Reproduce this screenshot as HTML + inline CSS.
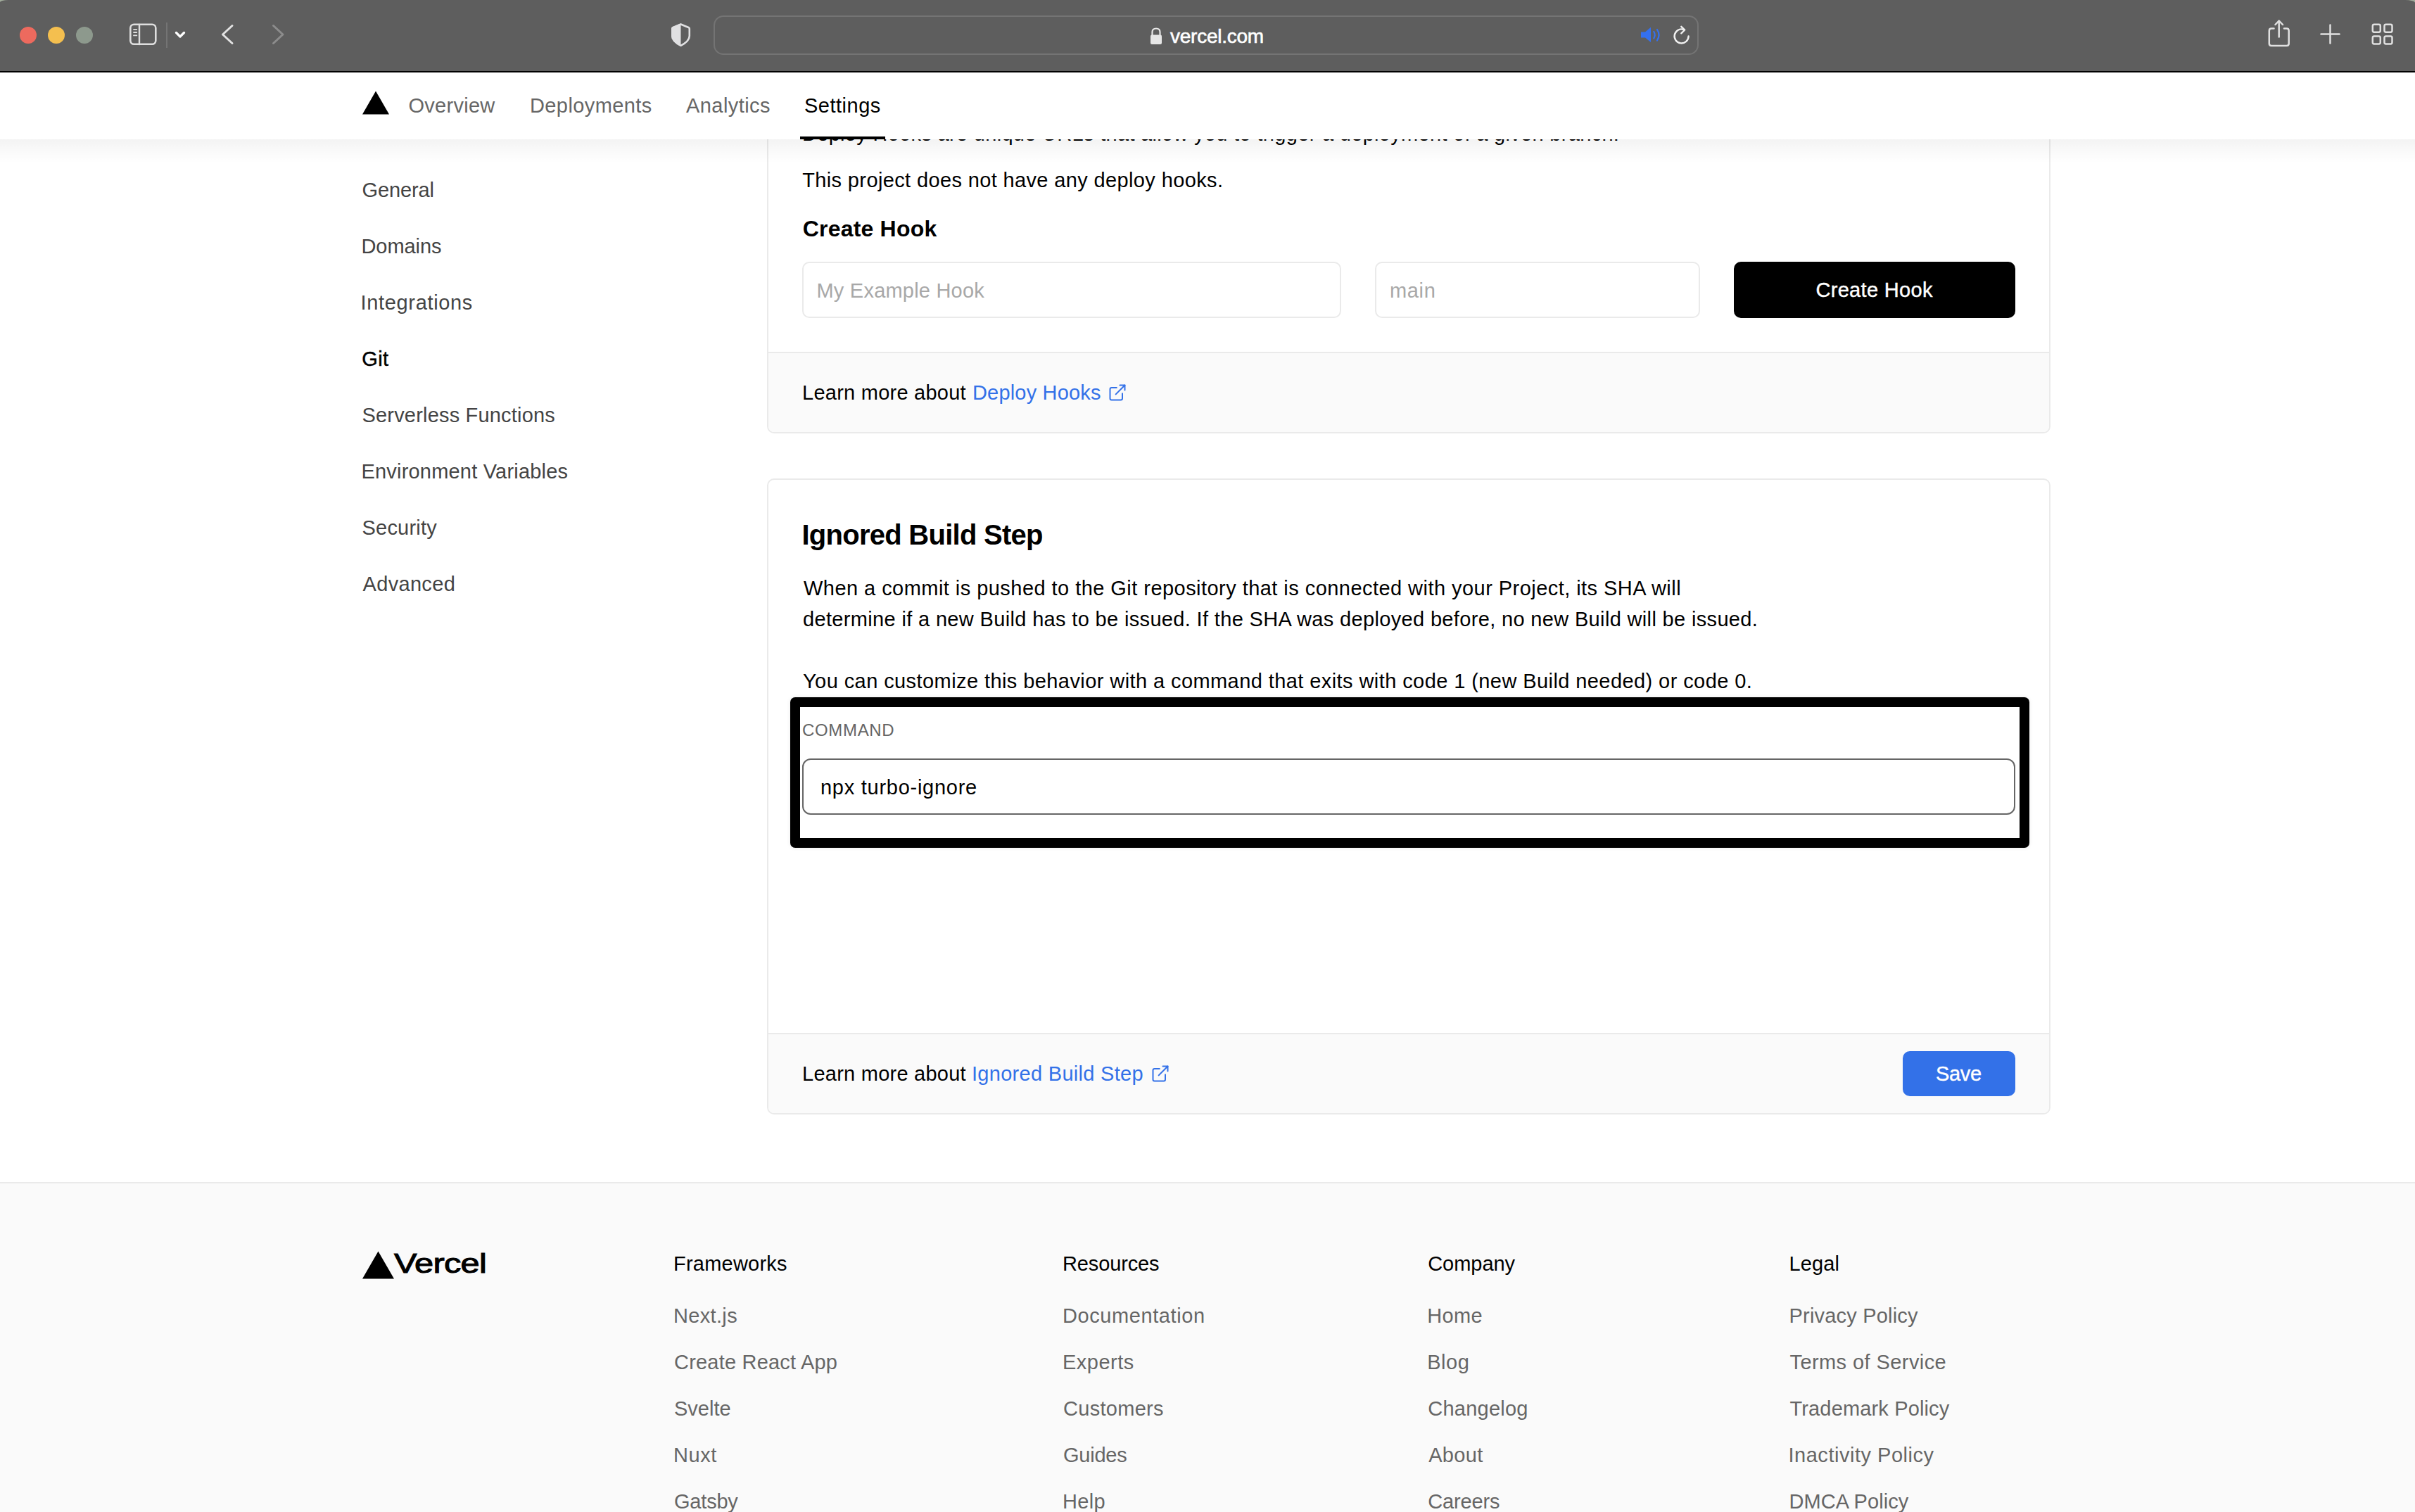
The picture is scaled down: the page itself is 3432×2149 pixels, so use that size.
<!DOCTYPE html>
<html><head><meta charset="utf-8"><title>Vercel - Git Settings</title>
<style>
html,body{margin:0;padding:0;}
body{width:3432px;height:2149px;overflow:hidden;position:relative;background:#fff;font-family:"Liberation Sans", sans-serif;}
.t{position:absolute;white-space:pre;font-family:"Liberation Sans", sans-serif;}
.b{position:absolute;box-sizing:border-box;}
</style></head><body>
<div class="b" style="left:1090px;top:120px;width:1824px;height:496px;border:2px solid #eaeaea;border-radius:10px;background:#fff"></div>
<div class="b" style="left:1092px;top:500px;width:1820px;height:114px;border-top:2px solid #eaeaea;background:#fafafa;border-radius:0 0 8px 8px"></div>
<div class="t" style="left:1140.0px;top:176px;font-size:29px;line-height:29px;font-weight:400;color:#000;letter-spacing:0.306px;">Deploy Hooks are unique URLs that allow you to trigger a deployment of a given branch.</div>
<div class="t" style="left:1140.2px;top:242px;font-size:29px;line-height:29px;font-weight:400;color:#000;letter-spacing:0.367px;">This project does not have any deploy hooks.</div>
<div class="t" style="left:1140.7px;top:309px;font-size:32px;line-height:32px;font-weight:700;color:#000;letter-spacing:0.200px;">Create Hook</div>
<div class="b" style="left:1140px;top:372px;width:766px;height:80px;border:2px solid #eaeaea;border-radius:10px;background:#fff"></div>
<div class="t" style="left:1160.5px;top:399px;font-size:29px;line-height:29px;font-weight:400;color:#a8a8a8;letter-spacing:0.214px;">My Example Hook</div>
<div class="b" style="left:1954px;top:372px;width:462px;height:80px;border:2px solid #eaeaea;border-radius:10px;background:#fff"></div>
<div class="t" style="left:1975.0px;top:399px;font-size:29px;line-height:29px;font-weight:400;color:#a8a8a8;letter-spacing:0.667px;">main</div>
<div class="b" style="left:2464px;top:372px;width:400px;height:80px;background:#000;border-radius:10px"></div>
<div class="t" style="left:2580.4px;top:398px;font-size:29px;line-height:29px;font-weight:400;color:#fff;letter-spacing:0.330px;-webkit-text-stroke-width:0.4px">Create Hook</div>
<div class="t" style="left:1140.0px;top:544px;font-size:29px;line-height:29px;font-weight:400;color:#000;letter-spacing:0.250px;">Learn more about</div>
<div class="t" style="left:1382.0px;top:544px;font-size:29px;line-height:29px;font-weight:400;color:#3371e8;letter-spacing:0.182px;">Deploy Hooks</div>
<svg class="b" style="left:1573.5px;top:544px" width="28" height="28" viewBox="0 0 24 24" fill="none" stroke="#3371e8" stroke-width="1.7" stroke-linecap="round" stroke-linejoin="round"><path d="M18 13v6a2 2 0 0 1-2 2H5a2 2 0 0 1-2-2V8a2 2 0 0 1 2-2h6"/><polyline points="15 3 21 3 21 9"/><line x1="10" y1="14" x2="21" y2="3"/></svg>
<div class="b" style="left:1090px;top:680px;width:1824px;height:904px;border:2px solid #eaeaea;border-radius:10px;background:#fff"></div>
<div class="b" style="left:1092px;top:1468px;width:1820px;height:114px;border-top:2px solid #eaeaea;background:#fafafa;border-radius:0 0 8px 8px"></div>
<div class="t" style="left:1139.4px;top:740px;font-size:40px;line-height:40px;font-weight:700;color:#000;letter-spacing:-0.729px;">Ignored Build Step</div>
<div class="t" style="left:1142.0px;top:822px;font-size:29px;line-height:29px;font-weight:400;color:#000;letter-spacing:0.453px;">When a commit is pushed to the Git repository that is connected with your Project, its SHA will</div>
<div class="t" style="left:1141.0px;top:866px;font-size:29px;line-height:29px;font-weight:400;color:#000;letter-spacing:0.343px;">determine if a new Build has to be issued. If the SHA was deployed before, no new Build will be issued.</div>
<div class="t" style="left:1141.0px;top:954px;font-size:29px;line-height:29px;font-weight:400;color:#000;letter-spacing:0.418px;">You can customize this behavior with a command that exits with code 1 (new Build needed) or code 0.</div>
<div class="b" style="left:1123px;top:991px;width:1761px;height:214px;border:14px solid #000;border-radius:7px;box-shadow:0 0 6px rgba(0,0,0,0.08)"></div>
<div class="t" style="left:1140.0px;top:1026px;font-size:24px;line-height:24px;font-weight:400;color:#666;letter-spacing:0.667px;">COMMAND</div>
<div class="b" style="left:1140px;top:1078px;width:1724px;height:80px;border:2px solid #666;border-radius:12px;background:#fff"></div>
<div class="t" style="left:1166.0px;top:1105px;font-size:29px;line-height:29px;font-weight:400;color:#000;letter-spacing:0.733px;">npx turbo-ignore</div>
<div class="t" style="left:1140.0px;top:1512px;font-size:29px;line-height:29px;font-weight:400;color:#000;letter-spacing:0.250px;">Learn more about</div>
<div class="t" style="left:1381.0px;top:1512px;font-size:29px;line-height:29px;font-weight:400;color:#3371e8;letter-spacing:0.294px;">Ignored Build Step</div>
<svg class="b" style="left:1634.5px;top:1512px" width="28" height="28" viewBox="0 0 24 24" fill="none" stroke="#3371e8" stroke-width="1.7" stroke-linecap="round" stroke-linejoin="round"><path d="M18 13v6a2 2 0 0 1-2 2H5a2 2 0 0 1-2-2V8a2 2 0 0 1 2-2h6"/><polyline points="15 3 21 3 21 9"/><line x1="10" y1="14" x2="21" y2="3"/></svg>
<div class="b" style="left:2704px;top:1494px;width:160px;height:64px;background:#3371e8;border-radius:10px"></div>
<div class="t" style="left:2751.0px;top:1512px;font-size:29px;line-height:29px;font-weight:400;color:#fff;letter-spacing:-0.333px;-webkit-text-stroke-width:0.4px">Save</div>
<div class="t" style="left:514.5px;top:256px;font-size:29px;line-height:29px;font-weight:400;color:#444;letter-spacing:-0.117px;">General</div>
<div class="t" style="left:513.5px;top:336px;font-size:29px;line-height:29px;font-weight:400;color:#444;letter-spacing:-0.083px;">Domains</div>
<div class="t" style="left:512.5px;top:416px;font-size:29px;line-height:29px;font-weight:400;color:#444;letter-spacing:0.664px;">Integrations</div>
<div class="t" style="left:514.2px;top:496px;font-size:29px;line-height:29px;font-weight:400;color:#000;letter-spacing:0.400px;-webkit-text-stroke-width:0.45px">Git</div>
<div class="t" style="left:514.5px;top:576px;font-size:29px;line-height:29px;font-weight:400;color:#444;letter-spacing:0.184px;">Serverless Functions</div>
<div class="t" style="left:513.5px;top:656px;font-size:29px;line-height:29px;font-weight:400;color:#444;letter-spacing:0.195px;">Environment Variables</div>
<div class="t" style="left:514.5px;top:736px;font-size:29px;line-height:29px;font-weight:400;color:#444;letter-spacing:0.214px;">Security</div>
<div class="t" style="left:515.5px;top:816px;font-size:29px;line-height:29px;font-weight:400;color:#444;letter-spacing:0.329px;">Advanced</div>
<div class="b" style="left:0px;top:1680px;width:3432px;height:469px;border-top:2px solid #eaeaea;background:#fafafa"></div>
<svg class="b" style="left:514px;top:1778px" width="47" height="40" viewBox="0 0 47 40"><polygon points="23.5,0.5 46,39.5 1,39.5" fill="#000"/></svg>
<div class="t" style="left:560px;top:1776px;font-size:39px;line-height:39px;font-weight:400;color:#000;letter-spacing:-0.6px;transform:scaleX(1.25);transform-origin:0 0;-webkit-text-stroke:1.0px #000">Vercel</div>
<div class="t" style="left:957.0px;top:1782px;font-size:29px;line-height:29px;font-weight:400;color:#000;letter-spacing:0.222px;">Frameworks</div>
<div class="t" style="left:957.0px;top:1856px;font-size:29px;line-height:29px;font-weight:400;color:#666;letter-spacing:0.333px;">Next.js</div>
<div class="t" style="left:958.0px;top:1922px;font-size:29px;line-height:29px;font-weight:400;color:#666;letter-spacing:0.200px;">Create React App</div>
<div class="t" style="left:958.0px;top:1988px;font-size:29px;line-height:29px;font-weight:400;color:#666;letter-spacing:0.000px;">Svelte</div>
<div class="t" style="left:957.0px;top:2054px;font-size:29px;line-height:29px;font-weight:400;color:#666;letter-spacing:0.567px;">Nuxt</div>
<div class="t" style="left:958.0px;top:2120px;font-size:29px;line-height:29px;font-weight:400;color:#666;letter-spacing:-0.200px;">Gatsby</div>
<div class="t" style="left:1510.0px;top:1782px;font-size:29px;line-height:29px;font-weight:400;color:#000;letter-spacing:-0.125px;">Resources</div>
<div class="t" style="left:1510.0px;top:1856px;font-size:29px;line-height:29px;font-weight:400;color:#666;letter-spacing:0.583px;">Documentation</div>
<div class="t" style="left:1510.0px;top:1922px;font-size:29px;line-height:29px;font-weight:400;color:#666;letter-spacing:0.500px;">Experts</div>
<div class="t" style="left:1511.0px;top:1988px;font-size:29px;line-height:29px;font-weight:400;color:#666;letter-spacing:0.287px;">Customers</div>
<div class="t" style="left:1511.0px;top:2054px;font-size:29px;line-height:29px;font-weight:400;color:#666;letter-spacing:-0.240px;">Guides</div>
<div class="t" style="left:1510.0px;top:2120px;font-size:29px;line-height:29px;font-weight:400;color:#666;letter-spacing:0.333px;">Help</div>
<div class="t" style="left:2029.2px;top:1782px;font-size:29px;line-height:29px;font-weight:400;color:#000;letter-spacing:-0.033px;">Company</div>
<div class="t" style="left:2028.2px;top:1856px;font-size:29px;line-height:29px;font-weight:400;color:#666;letter-spacing:0.400px;">Home</div>
<div class="t" style="left:2028.2px;top:1922px;font-size:29px;line-height:29px;font-weight:400;color:#666;letter-spacing:0.533px;">Blog</div>
<div class="t" style="left:2029.2px;top:1988px;font-size:29px;line-height:29px;font-weight:400;color:#666;letter-spacing:0.250px;">Changelog</div>
<div class="t" style="left:2030.2px;top:2054px;font-size:29px;line-height:29px;font-weight:400;color:#666;letter-spacing:0.325px;">About</div>
<div class="t" style="left:2029.2px;top:2120px;font-size:29px;line-height:29px;font-weight:400;color:#666;letter-spacing:-0.133px;">Careers</div>
<div class="t" style="left:2542.5px;top:1782px;font-size:29px;line-height:29px;font-weight:400;color:#000;letter-spacing:0.125px;">Legal</div>
<div class="t" style="left:2542.5px;top:1856px;font-size:29px;line-height:29px;font-weight:400;color:#666;letter-spacing:0.192px;">Privacy Policy</div>
<div class="t" style="left:2543.5px;top:1922px;font-size:29px;line-height:29px;font-weight:400;color:#666;letter-spacing:0.420px;">Terms of Service</div>
<div class="t" style="left:2543.5px;top:1988px;font-size:29px;line-height:29px;font-weight:400;color:#666;letter-spacing:0.147px;">Trademark Policy</div>
<div class="t" style="left:2541.5px;top:2054px;font-size:29px;line-height:29px;font-weight:400;color:#666;letter-spacing:0.519px;">Inactivity Policy</div>
<div class="t" style="left:2542.5px;top:2120px;font-size:29px;line-height:29px;font-weight:400;color:#666;letter-spacing:0.050px;">DMCA Policy</div>
<div class="b" style="left:0px;top:198px;width:3432px;height:34px;background:linear-gradient(rgba(0,0,0,0.048),rgba(0,0,0,0.022) 45%,rgba(0,0,0,0))"></div>
<div class="b" style="left:0px;top:103px;width:3432px;height:95px;background:#fff"></div>
<svg class="b" style="left:514px;top:129px" width="40" height="34" viewBox="0 0 40 34"><polygon points="20,0.5 39,33.5 1,33.5" fill="#000"/></svg>
<div class="t" style="left:580.5px;top:136px;font-size:29px;line-height:29px;font-weight:400;color:#666;letter-spacing:0.271px;">Overview</div>
<div class="t" style="left:753.0px;top:136px;font-size:29px;line-height:29px;font-weight:400;color:#666;letter-spacing:0.400px;">Deployments</div>
<div class="t" style="left:975.0px;top:136px;font-size:29px;line-height:29px;font-weight:400;color:#666;letter-spacing:0.438px;">Analytics</div>
<div class="t" style="left:1143.0px;top:136px;font-size:29px;line-height:29px;font-weight:400;color:#000;letter-spacing:0.500px;">Settings</div>
<div class="b" style="left:1137px;top:194px;width:121px;height:4px;background:#000"></div>
<div class="b" style="left:0px;top:0px;width:3432px;height:103px;background:#a2ad9c"></div>
<div class="b" style="left:0px;top:0px;width:3432px;height:101px;background:#5e5e5e;border-radius:12px 14px 0 0 / 3px 4px 0 0"></div>
<div class="b" style="left:0px;top:101px;width:3432px;height:2px;background:#000"></div>
<div class="b" style="left:28px;top:38px;width:24px;height:24px;background:#ed6a5e;border-radius:50%"></div>
<div class="b" style="left:68px;top:38px;width:24px;height:24px;background:#f4bf4f;border-radius:50%"></div>
<div class="b" style="left:108px;top:38px;width:24px;height:24px;background:#8d998d;border-radius:50%"></div>
<svg class="b" style="left:170px;top:20px" width="250" height="60" viewBox="170 20 250 60" fill="none" stroke-linecap="round" stroke-linejoin="round">
<rect x="185.3" y="34.8" width="36" height="28" rx="5" stroke="#dedede" stroke-width="2.6"/>
<line x1="198" y1="35" x2="198" y2="63" stroke="#dedede" stroke-width="2.4"/>
<line x1="190" y1="41.8" x2="194.3" y2="41.8" stroke="#dedede" stroke-width="1.8"/>
<line x1="190" y1="46" x2="194.3" y2="46" stroke="#dedede" stroke-width="1.8"/>
<line x1="190" y1="50.4" x2="194.3" y2="50.4" stroke="#dedede" stroke-width="1.8"/>
<line x1="237" y1="32" x2="237" y2="68" stroke="#7a7a7a" stroke-width="1.6" stroke-linecap="butt"/>
<polyline points="250.5,46.5 256,52 261.5,46.5" stroke="#fff" stroke-width="3.2"/>
<polyline points="330,36.5 316.5,49 330,61.5" stroke="#e2e2e2" stroke-width="3"/>
<polyline points="388.5,36.5 402,49 388.5,61.5" stroke="#8c8c8c" stroke-width="3"/>
</svg>
<svg class="b" style="left:950px;top:30px" width="36" height="40" viewBox="950 30 36 40">
<path d="M967.5 34.5 L979 39.3 Q979.8 39.7 979.8 40.7 L979.8 51 Q979.8 58.5 967.5 64.8 Q955.3 58.5 955.3 51 L955.3 40.7 Q955.3 39.7 956.1 39.3 Z" fill="none" stroke="#e0e0e2" stroke-width="2.6" stroke-linejoin="round"/>
<path d="M967.5 33.2 L955.6 38.2 Q954 38.9 954 40.5 L954 51 Q954 59.3 967.5 66 Z" fill="#e0e0e2"/>
</svg>
<div class="b" style="left:1014px;top:22px;width:1400px;height:56px;border:2px solid #747474;border-radius:14px"></div>
<svg class="b" style="left:1630px;top:36px" width="26" height="30" viewBox="1630 36 26 30">
<path d="M1637.5 50 L1637.5 45.5 Q1637.5 40.5 1643 40.5 Q1648.5 40.5 1648.5 45.5 L1648.5 50" fill="none" stroke="#e6e6e6" stroke-width="2.2"/>
<rect x="1635" y="49.5" width="16" height="13.5" rx="2" fill="#e6e6e6"/>
</svg>
<div class="t" style="left:1663px;top:38px;font-size:28px;line-height:28px;font-weight:400;color:#fff;letter-spacing:-0.25px;-webkit-text-stroke:0.6px #fff">vercel.com</div>
<svg class="b" style="left:2325px;top:34px" width="40" height="32" viewBox="2325 34 40 32">
<path d="M2332 45.5 L2338 45.5 L2346 38.8 L2346 60 L2338 53.5 L2332 53.5 Z" fill="#3470ef"/>
<path d="M2350.3 45 Q2353 49.5 2350.3 54.5" fill="none" stroke="#3470ef" stroke-width="2.2" stroke-linecap="round"/>
<path d="M2355 42 Q2360 49.5 2355 57.5" fill="none" stroke="#3470ef" stroke-width="2.2" stroke-linecap="round"/>
</svg>
<svg class="b" style="left:2370px;top:30px" width="40" height="40" viewBox="2370 30 40 40" fill="none" stroke="#f0f0f0" stroke-width="2.4" stroke-linecap="round" stroke-linejoin="round">
<path d="M2399.6 51.5 A10 10 0 1 1 2392.3 41.8"/>
<polyline points="2389.3,37.8 2394.2,42.5 2389.3,47.3"/>
</svg>
<svg class="b" style="left:3210px;top:20px" width="210" height="60" viewBox="3210 20 210 60" fill="none" stroke="#e0e0e0" stroke-width="2.5" stroke-linecap="round" stroke-linejoin="round">
<path d="M3231.5 40.5 L3228 40.5 Q3224.8 40.5 3224.8 43.7 L3224.8 62 Q3224.8 65 3228 65 L3249.5 65 Q3252.7 65 3252.7 62 L3252.7 43.7 Q3252.7 40.5 3249.5 40.5 L3246 40.5"/>
<line x1="3238.7" y1="30" x2="3238.7" y2="52.5"/>
<polyline points="3233.5,35 3238.7,29.5 3244,35"/>
<line x1="3311.5" y1="35.5" x2="3311.5" y2="61.5"/>
<line x1="3298.5" y1="48.5" x2="3324.5" y2="48.5"/>
<rect x="3371.8" y="34.8" width="11" height="11" rx="2.2"/>
<rect x="3388.5" y="34.8" width="11" height="11" rx="2.2"/>
<rect x="3371.8" y="51.5" width="11" height="11" rx="2.2"/>
<rect x="3388.5" y="51.5" width="11" height="11" rx="2.2"/>
</svg>
</body></html>
